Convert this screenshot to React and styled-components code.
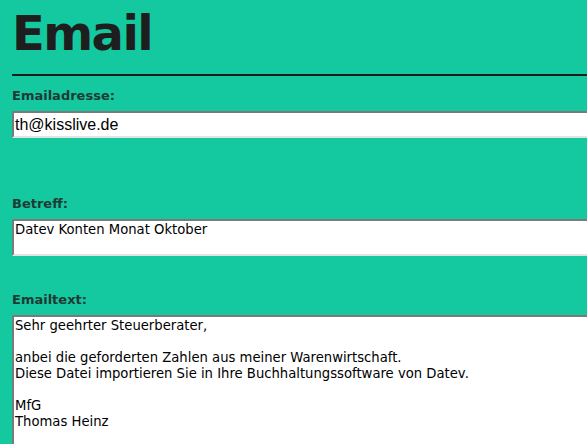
import React from 'react';
import styled, { createGlobalStyle } from 'styled-components';

const GlobalStyle = createGlobalStyle`
  html, body {
    margin: 0;
    padding: 0;
    background: #14c9a0;
    overflow: hidden;
  }
`;

const Page = styled.div`
  padding: 0 12px;
  height: 444px;
  overflow: hidden;
  font-family: "DejaVu Sans", Verdana, sans-serif;
`;

const Title = styled.h1`
  margin: 5px 0 13px;
  font-size: 48px;
  line-height: 56px;
  letter-spacing: -1.6px;
  font-weight: bold;
  color: #1e1e1e;
`;

const Rule = styled.div`
  height: 2px;
  width: 620px;
  background: #1e1e1e;
  margin-bottom: 12px;
`;

const Field = styled.div`
  display: flex;
  flex-direction: column;
  gap: 7px;
  margin-bottom: ${(p) => p.$gap || 0}px;
`;

const Label = styled.label`
  font-size: 13px;
  line-height: 16px;
  font-weight: bold;
  color: #1f3a34;
`;

const Box = styled.input`
  box-sizing: border-box;
  width: 620px;
  height: 27px;
  margin: 0;
  padding: 1px;
  border: 2px solid;
  border-color: #7a7a7a #e3e3e3 #e3e3e3 #7a7a7a;
  background: #fff;
  font-family: "Liberation Sans", Arial, sans-serif;
  font-size: 16px;
  color: #000;
  outline: none;
`;

const Area = styled.textarea`
  box-sizing: border-box;
  width: 620px;
  height: ${(p) => p.$h}px;
  margin: 0;
  padding: 1px;
  border: 2px solid;
  border-color: #7a7a7a #e3e3e3 #e3e3e3 #7a7a7a;
  background: #fff;
  font-family: "DejaVu Sans", Verdana, sans-serif;
  font-size: 13.2px;
  line-height: 16px;
  color: #000;
  resize: none;
  overflow: hidden;
  outline: none;
  display: block;
`;

const body = `Sehr geehrter Steuerberater,

anbei die geforderten Zahlen aus meiner Warenwirtschaft.
Diese Datei importieren Sie in Ihre Buchhaltungssoftware von Datev.

MfG
Thomas Heinz`;

export default function App() {
  return (
    <>
      <GlobalStyle />
      <Page>
        <Title>Email</Title>
        <Rule />
        <Field $gap={58}>
          <Label htmlFor="addr">Emailadresse:</Label>
          <Box id="addr" defaultValue="th@kisslive.de" />
        </Field>
        <Field $gap={36}>
          <Label htmlFor="subj">Betreff:</Label>
          <Area id="subj" $h={37} defaultValue="Datev Konten Monat Oktober" />
        </Field>
        <Field>
          <Label htmlFor="text">Emailtext:</Label>
          <Area id="text" $h={200} defaultValue={body} />
        </Field>
      </Page>
    </>
  );
}
